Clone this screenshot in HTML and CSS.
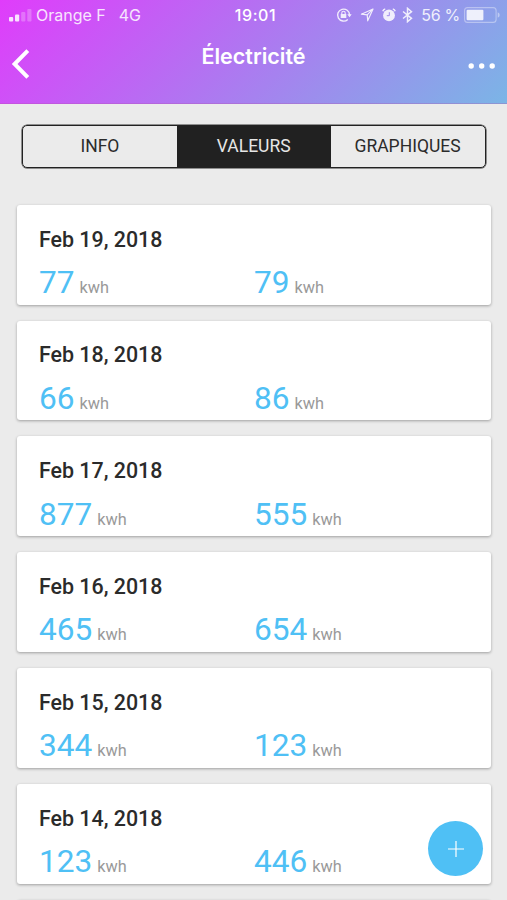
FILE: index.html
```
<!DOCTYPE html>
<html lang="fr">
<head>
  <meta charset="UTF-8">
  <meta name="viewport" content="width=device-width, initial-scale=1.0">
  <title>Électricité</title>
  <link rel="stylesheet" href="styles.css">
</head>
<body>
  <header class="header">
    <div class="status">
      <div class="status-left">
        <svg class="signal" width="24" height="14" viewBox="0 0 24 14" fill="#fff">
          <rect x="0" y="9" width="4.2" height="4.5" rx="1"/>
          <rect x="6" y="6.5" width="4.2" height="7" rx="1"/>
          <rect x="12.2" y="4" width="4.2" height="9.5" rx="1" opacity=".3"/>
          <rect x="18.3" y="1" width="4.2" height="12.5" rx="1" opacity=".3"/>
        </svg>
        <span class="carrier">Orange F</span>
        <span class="network">4G</span>
      </div>
      <div class="clock">19:01</div>
      <div class="status-right">
        <svg width="16" height="16" viewBox="0 0 16 16" fill="none" stroke="#fff" stroke-width="1.4">
          <path d="M11.8 12.4A6 6 0 1 1 13.6 8"/>
          <path d="M11.3 7.3h4.4l-2.2 2.9z" fill="#fff" stroke="none"/>
          <rect x="4.7" y="7" width="5.6" height="4" fill="#fff" stroke="none"/>
          <path d="M5.8 7.2V6a1.7 1.7 0 0 1 3.4 0v1.2" stroke-width="1.1"/>
        </svg>
        <svg class="location" width="14" height="14" viewBox="0 0 14 14" fill="none" stroke="#fff" stroke-width="1.2" stroke-linejoin="round">
          <path d="M13 1L1.4 6.2l5.8.6.5 6z"/>
          <path d="M12.8 1.2L7.2 6.8"/>
        </svg>
        <svg class="alarm" width="14" height="14" viewBox="0 0 14 14">
          <circle cx="7" cy="7.4" r="5.9" fill="#fff"/>
          <path d="M.8 3.2A3 3 0 0 1 3.2 1M13.2 3.2A3 3 0 0 0 10.8 1" fill="none" stroke="#fff" stroke-width="1.5"/>
          <path d="M7.3 4.2v3.5H4.8" fill="none" stroke="#a088ee" stroke-width="1"/>
        </svg>
        <svg class="bluetooth" width="11" height="16" viewBox="0 0 11 16" fill="none" stroke="#fff" stroke-width="1.5">
          <path d="M1 4.5l8.5 6.8-4 3.4V1.3l4 3.4L1 11.5"/>
        </svg>
        <span class="percent">56 %</span>
        <svg class="battery" width="37" height="16" viewBox="0 0 37 16">
          <rect x=".6" y=".6" width="31.5" height="14.8" rx="3" fill="none" stroke="#fff" stroke-width="1.1" opacity=".45"/>
          <rect x="2.6" y="2.7" width="16.8" height="10.6" rx="1" fill="#fff"/>
          <path d="M33.7 5.3q2 .7 2 2.7t-2 2.7z" fill="#fff" opacity=".5"/>
        </svg>
      </div>
    </div>
    <nav class="navbar">
      <svg class="back" width="20" height="30" viewBox="0 0 20 30" fill="none" stroke="#fff" stroke-width="4">
        <path d="M16.8 1.6L3.6 15l13.2 13.4"/>
      </svg>
      <h1 class="title">Électricité</h1>
      <svg class="more" width="28" height="6" viewBox="0 0 28 6" fill="#fff">
        <circle cx="3.2" cy="3" r="2.7"/>
        <circle cx="13.7" cy="3" r="2.7"/>
        <circle cx="24.2" cy="3" r="2.7"/>
      </svg>
    </nav>
  </header>

  <div class="tabs">
    <div class="tab">INFO</div>
    <div class="tab active">VALEURS</div>
    <div class="tab">GRAPHIQUES</div>
  </div>

  <main class="list">
    <div class="card">
      <h2>Feb 19, 2018</h2>
      <div class="values">
        <div><b>77</b> kwh</div>
        <div><b>79</b> kwh</div>
      </div>
    </div>
    <div class="card">
      <h2>Feb 18, 2018</h2>
      <div class="values">
        <div><b>66</b> kwh</div>
        <div><b>86</b> kwh</div>
      </div>
    </div>
    <div class="card">
      <h2>Feb 17, 2018</h2>
      <div class="values">
        <div><b>877</b> kwh</div>
        <div><b>555</b> kwh</div>
      </div>
    </div>
    <div class="card">
      <h2>Feb 16, 2018</h2>
      <div class="values">
        <div><b>465</b> kwh</div>
        <div><b>654</b> kwh</div>
      </div>
    </div>
    <div class="card">
      <h2>Feb 15, 2018</h2>
      <div class="values">
        <div><b>344</b> kwh</div>
        <div><b>123</b> kwh</div>
      </div>
    </div>
    <div class="card">
      <h2>Feb 14, 2018</h2>
      <div class="values">
        <div><b>123</b> kwh</div>
        <div><b>446</b> kwh</div>
      </div>
    </div>
    <div class="card last"></div>
  </main>

  <div class="fab">
    <svg width="16" height="16" viewBox="0 0 16 16" stroke="#fff" stroke-width="1.2">
      <path d="M8 0v16M0 8h16"/>
    </svg>
  </div>
</body>
</html>
```
FILE: styles.css
```
* {
  box-sizing: border-box;
}
body {
  margin: 0;
  height: 900px;
  overflow: hidden;
  position: relative;
  background: #ebebeb;
  font-family: Roboto, sans-serif;
  color: #2b2b2b;
}
svg {
  display: block;
  flex: none;
}
.header {
  height: 104px;
  background: linear-gradient(135deg, #e03cfb, #7bb5e6);
  border-bottom: 1px solid rgba(140, 130, 160, 0.3);
  color: #fff;
}
.status {
  height: 30px;
  display: grid;
  grid-template-columns: 1fr auto 1fr;
  align-items: center;
  padding: 0 7px 0 9px;
  font-family: Inter, sans-serif;
  font-size: 16px;
}
.status-left, .status-right {
  display: flex;
  align-items: center;
  white-space: nowrap;
  opacity: 0.85;
}
.status-right {
  justify-content: flex-end;
}
.carrier {
  margin-left: 3px;
}
.network {
  margin-left: 13px;
}
.clock {
  font-weight: 500;
  letter-spacing: 0.6px;
  margin-left: 2px;
}
.location {
  margin-left: 8px;
}
.alarm {
  margin-left: 8px;
}
.bluetooth {
  margin-left: 6px;
}
.percent {
  margin-left: 8px;
  letter-spacing: -0.3px;
}
.battery {
  margin-left: 4px;
  margin-right: -1px;
}
.navbar {
  height: 73px;
  display: grid;
  grid-template-columns: 1fr auto 1fr;
  padding: 0 11px;
}
.back {
  margin-top: 19px;
}
.title {
  margin: 13px 0 0;
  font-family: Inter, sans-serif;
  font-size: 21.5px;
  line-height: 26px;
  font-weight: 600;
}
.more {
  margin-top: 33px;
  justify-self: end;
}
.tabs {
  display: grid;
  grid-template-columns: repeat(3, 1fr);
  height: 43px;
  margin: 21px 21.5px 0 22px;
  border: 1px solid #222;
  border-radius: 5px;
  overflow: hidden;
  box-shadow: 0 0 0 0.5px #333;
}
.tab {
  line-height: 41px;
  text-align: center;
  font-size: 17.5px;
}
.tab.active {
  background: #212121;
  color: #e6e6e6;
}
.list {
  display: flex;
  flex-direction: column;
  gap: 16px;
  padding: 36.8px 16px 0 17px;
}
.card {
  flex: none;
  height: 99.8px;
  padding: 20.8px 22px 0;
  background: #fff;
  border-radius: 3px;
  box-shadow: 0 1px 3px rgba(0, 0, 0, 0.33);
}
.card.last {
  height: 10px;
  margin-bottom: -20px;
  padding: 0;
}
.card h2 {
  margin: 0;
  font-size: 21.4px;
  line-height: 28px;
  font-weight: 500;
}
.values {
  display: grid;
  grid-template-columns: 1fr 1fr;
  line-height: 38px;
  margin-top: 10.4px;
  font-size: 16.3px;
  color: #999;
}
.values b {
  margin-right: 1px;
  font-size: 31.6px;
  font-weight: 400;
  color: #4fc0f5;
}
.fab {
  position: absolute;
  right: 24px;
  bottom: 24px;
  width: 55px;
  height: 55px;
  display: flex;
  align-items: center;
  justify-content: center;
  border-radius: 50%;
  background: #4fc0f5;
}
```
